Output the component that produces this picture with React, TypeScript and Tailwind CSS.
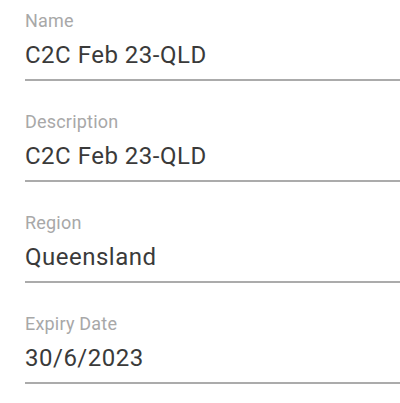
const fields = [
  { label: 'Name', value: 'C2C Feb 23-QLD' },
  { label: 'Description', value: 'C2C Feb 23-QLD' },
  { label: 'Region', value: 'Queensland' },
  { label: 'Expiry Date', value: '30/6/2023' },
];

export default function App() {
  return (
    <div
      className="h-[403px] w-[400px] overflow-hidden bg-white pl-[25px]"
      style={{ fontFamily: 'Roboto, "Liberation Sans", sans-serif' }}
    >
      {fields.map((f) => (
        <div key={f.label} className="flex h-[101px] flex-col pt-[12px]">
          <span className="h-[18px] text-[18px] leading-[18px] tracking-[0.2px] text-[#a8a8a8]">
            {f.label}
          </span>
          <span className="mt-[13px] h-[24px] text-[24px] leading-[24px] tracking-[0.5px] text-[#3a3a3a]">
            {f.value}
          </span>
          <div className="mt-[12px] h-[2px] bg-[#ababab]" />
        </div>
      ))}
    </div>
  );
}
